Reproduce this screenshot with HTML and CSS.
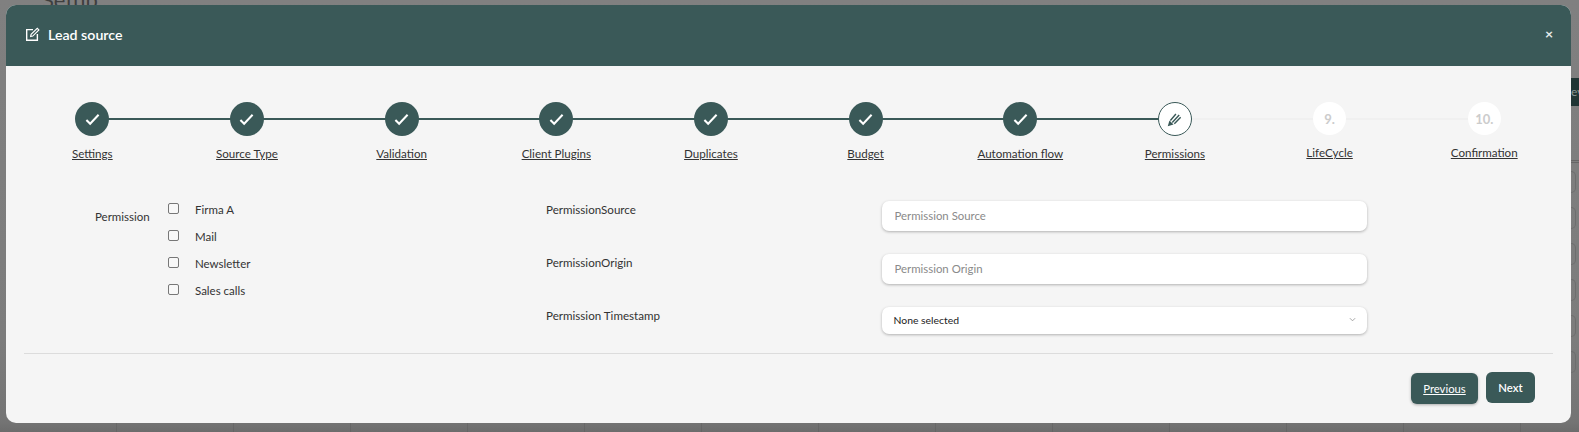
FILE: index.html
```html
<!DOCTYPE html>
<html lang="en">
<head>
<meta charset="utf-8">
<title>Lead source</title>
<link rel="stylesheet" href="styles.css">
</head>
<body>
<div class="backdrop-title">Setup</div>
<div class="backdrop-tab">ev</div>
<div class="backdrop-rows">
  <span class="ghost-box"></span><span class="ghost-box"></span><span class="ghost-box"></span><span class="ghost-box"></span><span class="ghost-box"></span><span class="ghost-box"></span>
</div>
<div class="backdrop-bottom"></div>
<div class="modal">
  <header class="modal-header">
    <h1 class="modal-title">
      <svg class="title-icon" viewBox="0 0 16 16" fill="none" stroke="#fff" stroke-width="1.5"><path d="M8.5 2.8H1.8v11.4h11.4V7.5"/><path d="M6 10.2l.5-2.4 6.6-6.4 1.7 1.7-6.5 6.6z" stroke-width="1.2"/></svg>
      Lead source
    </h1>
    <span class="modal-close">×</span>
  </header>
  <div class="modal-body">
    <ol class="steps">
      <li class="step done"><span class="dot"><svg class="check" viewBox="0 0 16 16"><path d="M1.5 8.5l4 4 9-9.5"/></svg></span><a class="step-label">Settings</a></li>
      <li class="step done"><span class="dot"><svg class="check" viewBox="0 0 16 16"><path d="M1.5 8.5l4 4 9-9.5"/></svg></span><a class="step-label">Source Type</a></li>
      <li class="step done"><span class="dot"><svg class="check" viewBox="0 0 16 16"><path d="M1.5 8.5l4 4 9-9.5"/></svg></span><a class="step-label">Validation</a></li>
      <li class="step done"><span class="dot"><svg class="check" viewBox="0 0 16 16"><path d="M1.5 8.5l4 4 9-9.5"/></svg></span><a class="step-label">Client Plugins</a></li>
      <li class="step done"><span class="dot"><svg class="check" viewBox="0 0 16 16"><path d="M1.5 8.5l4 4 9-9.5"/></svg></span><a class="step-label">Duplicates</a></li>
      <li class="step done"><span class="dot"><svg class="check" viewBox="0 0 16 16"><path d="M1.5 8.5l4 4 9-9.5"/></svg></span><a class="step-label">Budget</a></li>
      <li class="step done"><span class="dot"><svg class="check" viewBox="0 0 16 16"><path d="M1.5 8.5l4 4 9-9.5"/></svg></span><a class="step-label">Automation flow</a></li>
      <li class="step current"><span class="dot"><svg class="pencil" viewBox="0 0 16 16"><path d="M.8 15.2l1.8-6.2 4.4 4.4z" fill="#3a5958"/><path d="M3.6 9L9.5 2.2M5.6 11.2L13 3.2M7.8 12.6l6.8-7" fill="none" stroke="#3a5958" stroke-width="1.5"/></svg></span><a class="step-label">Permissions</a></li>
      <li class="step todo"><span class="dot">9.</span><a class="step-label">LifeCycle</a></li>
      <li class="step todo"><span class="dot">10.</span><a class="step-label">Confirmation</a></li>
    </ol>
    <form class="form">
      <div class="permission-group">
        <span class="group-label">Permission</span>
        <div class="checks">
          <label class="check-row"><input type="checkbox" class="checkbox"><span>Firma A</span></label>
          <label class="check-row"><input type="checkbox" class="checkbox"><span>Mail</span></label>
          <label class="check-row"><input type="checkbox" class="checkbox"><span>Newsletter</span></label>
          <label class="check-row"><input type="checkbox" class="checkbox"><span>Sales calls</span></label>
        </div>
      </div>
      <div class="fields">
        <div class="field"><span class="field-label">PermissionSource</span><input class="control" placeholder="Permission Source"></div>
        <div class="field"><span class="field-label">PermissionOrigin</span><input class="control" placeholder="Permission Origin"></div>
        <div class="field field-last"><span class="field-label">Permission Timestamp</span>
          <div class="control select">None selected<svg class="chev" viewBox="0 0 8 5"><path d="M1 1l3 3 3-3"/></svg></div>
        </div>
      </div>
    </form>
    <div class="footer">
      <a class="btn btn-prev">Previous</a>
      <a class="btn btn-next">Next</a>
    </div>
  </div>
</div>
</body>
</html>
```
FILE: styles.css
```css
* { box-sizing: border-box; }
html, body { margin: 0; height: 432px; overflow: hidden; }
body {
  background: #7b7b7b linear-gradient(#808080 0, #7c7c7c 340px, #747474 422px, #6c6c6c 432px);
  font-family: "Lato", "Open Sans", sans-serif;
  color: #333;
  padding: 5px 8px 0 6px;
}
.backdrop-title { position: absolute; left: 42px; top: -14px; font-size: 22px; color: #3e3e3e; }
.backdrop-tab { position: absolute; right: 0; top: 78px; width: 8px; height: 28px; background: #1f3534; color: #8a9a99; font-size: 12px; line-height: 28px; overflow: hidden; }
.backdrop-rows {
  position: absolute;
  right: 0;
  top: 160px;
  width: 8px;
  height: 272px;
  border-top: 3px double #666;
  display: flex;
  flex-direction: column;
  padding-top: 8px;
  gap: 14px;
}
.ghost-box { flex: none; width: 5px; height: 22px; border: 1px solid #6e6e6e; border-left: 0; border-radius: 0 5px 5px 0; box-shadow: 0 7px 0 -6px #666; }
.backdrop-bottom {
  position: absolute;
  left: 0;
  right: 0;
  top: 423px;
  height: 9px;
  background: repeating-linear-gradient(90deg, transparent 0 116px, rgba(70,70,70,.22) 116px 117px);
}

.modal {
  position: relative;
  height: 418px;
  background: #f5f5f5;
  border-radius: 10px;
  overflow: hidden;
}
.modal-header {
  height: 61px;
  background: #3a5958;
  color: #fff;
  display: flex;
  align-items: center;
  justify-content: space-between;
  padding: 0 18px 2px 19px;
}
.modal-title { margin: 0; display: flex; align-items: center; gap: 8px; font-size: 14.2px; font-weight: 600; }
.title-icon { width: 15px; height: 15px; }
.modal-close { font-size: 14px; font-weight: 700; color: #e6ecec; margin-top: -2px; }

.modal-body { padding: 36px 18px 0; }
.steps {
  list-style: none;
  margin: 0 0 0 -9px;
  padding: 0;
  display: grid;
  grid-template-columns: repeat(10, 154.67px);
}
.step { position: relative; display: flex; flex-direction: column; align-items: center; gap: 10px; }
.step::before {
  content: "";
  position: absolute;
  top: 16px;
  left: 50%;
  width: 100%;
  height: 2px;
  background: #3a5958;
}
.step:last-child::before { display: none; }
.step.current::before, .step.todo::before { background: #f0f0f0; }
.dot {
  position: relative;
  width: 34px;
  height: 34px;
  border-radius: 50%;
  display: flex;
  align-items: center;
  justify-content: center;
  font-size: 13px;
  font-weight: 700;
}
.done .dot { background: #3a5958; }
.current .dot { background: #fff; border: 1px solid #3a5958; }
.todo .dot { background: #fff; color: #ccc; width: 33px; height: 33px; }
.check { width: 15px; height: 15px; fill: none; stroke: #fff; stroke-width: 2.2; }
.pencil { width: 15px; height: 15px; }
.step-label { font-size: 11.6px; color: #333; text-decoration: underline; line-height: 16px; }

.form { display: flex; margin-top: 39px; padding-left: 71px; height: 153px; border-bottom: 1px solid #dcdcdc; }
.permission-group { display: flex; width: 451px; }
.group-label { font-size: 11.5px; width: 73px; padding-top: 8px; line-height: 16px; }
.checks { display: flex; flex-direction: column; gap: 11px; }
.check-row { display: flex; align-items: flex-start; font-size: 11.5px; height: 16px; line-height: 16px; }
.checkbox { margin: 2px 16px 0 0; width: 11px; height: 11px; flex: none; appearance: none; background: #f8f8f8; border: 1px solid #777; border-radius: 2px; }
.check-row span { padding-top: 1px; }
.fields { display: flex; flex-direction: column; gap: 23px; }
.field { display: flex; height: 30px; }
.field-last { height: 27px; }
.field-label { width: 335.5px; font-size: 11.6px; line-height: 16px; padding-top: 1px; }
.control {
  width: 485px;
  height: 100%;
  background: #fff;
  border: 0;
  border-radius: 7px;
  box-shadow: 0 1px 3px rgba(0,0,0,.28);
  padding: 0 13px 2px;
  font: 11.4px "Lato", sans-serif;
  outline: none;
}
.control::placeholder { color: #8a8a8a; opacity: 1; }
.select { display: flex; align-items: center; justify-content: space-between; font-size: 10.4px; color: #222; padding: 0 11px 2px 12px; }
.chev { width: 7px; height: 5px; fill: none; stroke: #999; stroke-width: 1; }

.footer { display: flex; justify-content: flex-end; align-items: flex-start; gap: 8px; padding: 18px 18px 0 0; }
.btn { display: flex; align-items: center; justify-content: center; background: #3a5958; color: #fff; border-radius: 6px; font-size: 11.3px; }
.btn-prev { width: 67px; height: 31px; margin-top: 1px; text-decoration: underline; box-shadow: 0 1px 3px rgba(0,0,0,.3); }
.btn-next { width: 49px; height: 31px; font-weight: 600; }
```
